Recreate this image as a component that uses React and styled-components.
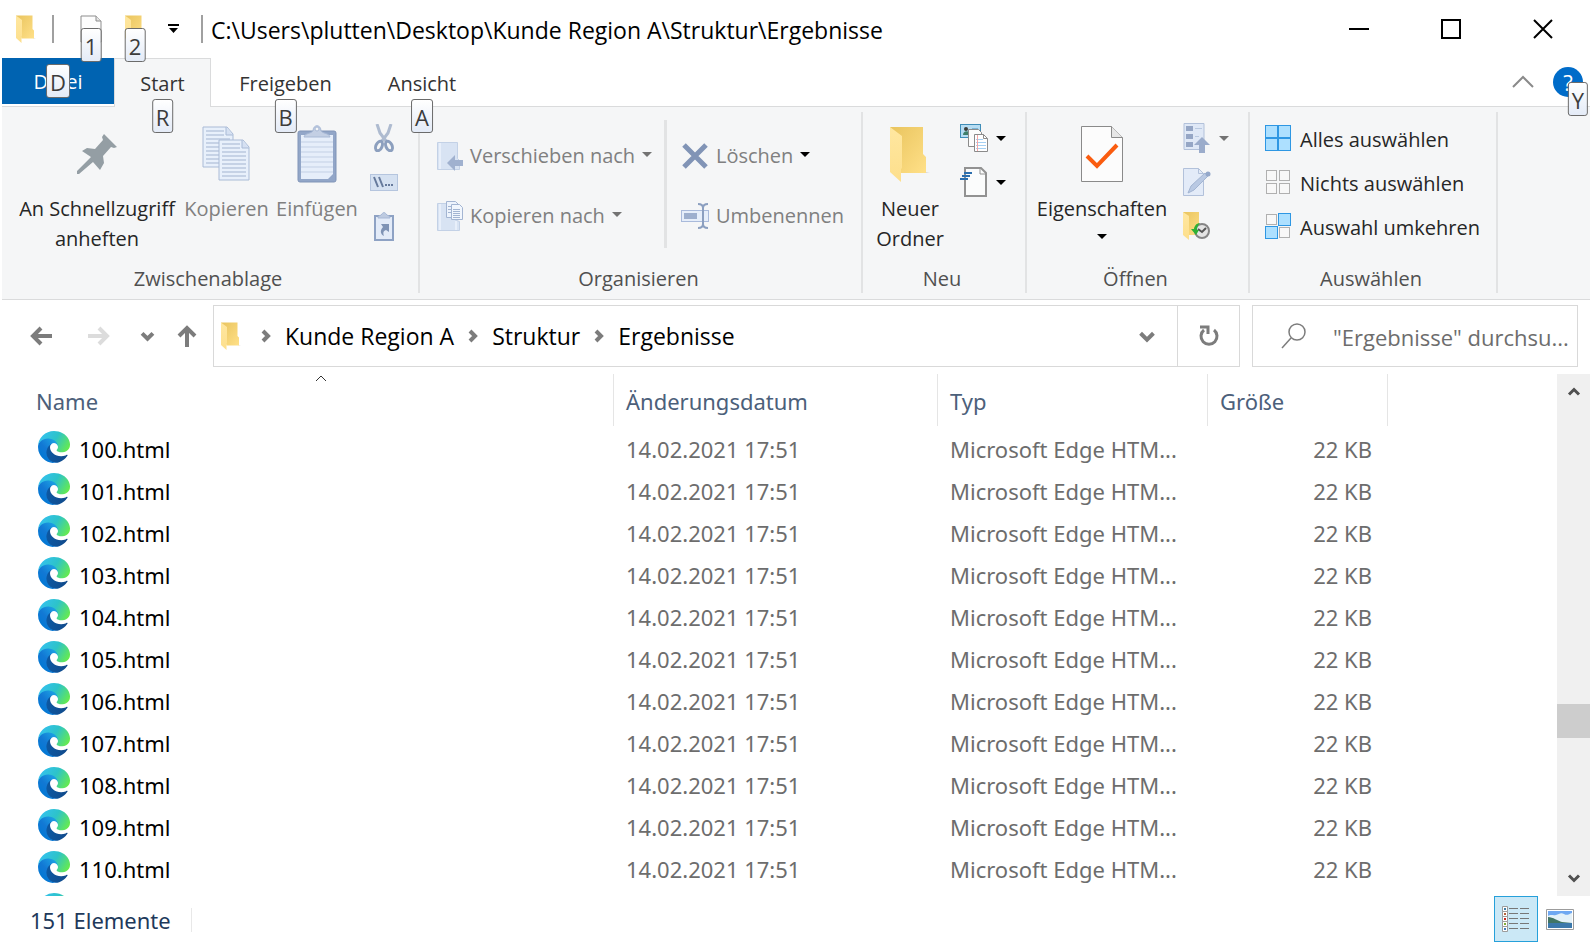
import React from "react";
import styled, { createGlobalStyle } from "styled-components";

const FILES = Array.from({ length: 12 }, (_, i) => ({
  name: `${100 + i}.html`,
  date: "14.02.2021 17:51",
  type: "Microsoft Edge HTM...",
  size: "22 KB",
}));

const CRUMBS = ["Kunde Region A", "Struktur", "Ergebnisse"];

/* ---------- icons ---------- */

const FolderIcon = ({ width, height }) => (
  <svg width={width} height={height} viewBox="0 0 40 56" preserveAspectRatio="none">
    <path d="M34 46h6l-4 1z" fill="#d8d8d8" />
    <path d="M0 1h33v27l3 3v16H11z" fill="url(#folderBack)" />
    <path d="M0 1l12 9v32l-1 1v13L0 46z" fill="url(#folderFront)" />
  </svg>
);

const PageIcon = () => (
  <svg width="22" height="28" viewBox="0 0 22 28">
    <path d="M1 1h15l5 5v21H1z" fill="#fdfdfd" stroke="#8d8d8d" />
    <path d="M16 1v5h5" fill="#e6e6e6" stroke="#8d8d8d" />
  </svg>
);

const CustomizeIcon = () => (
  <svg width="11" height="10" viewBox="0 0 11 10">
    <path d="M0 0h11v2H0zM1 4h9L5.5 9z" />
  </svg>
);

const Triangle = styled.span`
  width: 0;
  height: 0;
  border: 5px solid transparent;
  border-top-color: ${({ $muted }) => ($muted ? "#737373" : "#000")};
  border-bottom-width: 0;
`;

const PinIcon = () => (
  <svg width="42" height="42" viewBox="0 0 42 42">
    <path
      d="M28 1l13 13-3 1-3-1-8 9 1 7-4 7-7-8L3 41H1v-3l14-14-9-6 5-3 8 1 8-9-1-3z"
      fill="#949ea4"
    />
  </svg>
);

const Sheet = ({ x, y }) => (
  <g transform={`translate(${x} ${y})`}>
    <path d="M1 1h24l6 7v33H1z" fill="#e8f0fb" stroke="#aabbd6" />
    <path d="M24 1v8h7" fill="#d5e0f2" stroke="#aabbd6" />
    <path
      d="M4 5h18M4 9h18M4 13h24M4 17h24M4 21h24M4 25h24M4 29h24M4 33h24M4 37h24"
      stroke="#a3b4d0"
    />
  </g>
);

const CopyIcon = () => (
  <svg width="50" height="56" viewBox="0 0 50 56">
    <Sheet x={0} y={0} />
    <Sheet x={16} y={13} />
  </svg>
);

const PasteIcon = () => (
  <svg width="40" height="58" viewBox="0 0 40 58">
    <rect x="1" y="6" width="38" height="51" rx="2" fill="#92a6c8" stroke="#8195b8" />
    <path d="M4 10h32v39l-5 5H4z" fill="#e6eefa" />
    <path d="M4 17h32M4 22h32M4 27h32M4 32h32M4 37h32M4 42h32M4 47h32" stroke="#c3d0e5" />
    <path d="M7 12c1-4 6-3 9-6 0-7 8-7 8 0 3 3 8 2 9 6z" fill="#c3cfe4" stroke="#a7b8d5" />
    <circle cx="20" cy="4" r="2" fill="#f5f6f7" stroke="#a7b8d5" />
  </svg>
);

const ScissorsIcon = () => (
  <svg width="20" height="28" viewBox="0 0 20 28" fill="none">
    <path d="M3 0l3 9 6 8M17 0l-3 9-6 8" stroke="#aebbd0" strokeWidth="3" />
    <ellipse cx="5" cy="22" rx="3" ry="5" transform="rotate(25 5 22)" stroke="#8c9fbe" strokeWidth="3" />
    <ellipse cx="15" cy="22" rx="3" ry="5" transform="rotate(-25 15 22)" stroke="#8c9fbe" strokeWidth="3" />
  </svg>
);

const PathIcon = () => (
  <svg width="28" height="17" viewBox="0 0 28 17">
    <rect x="0.5" y="0.5" width="27" height="16" fill="#d5e1f1" stroke="#b5c5de" />
    <path d="M4 3l4 10M9 3l4 10" stroke="#667a9c" strokeWidth="2" />
    <path d="M15 10h2v2h-2zM18 10h2v2h-2zM21 10h2v2h-2z" fill="#667a9c" />
  </svg>
);

const ShortcutIcon = () => (
  <svg width="20" height="29" viewBox="0 0 20 29">
    <rect x="1" y="4" width="18" height="24" fill="#e3ebf8" stroke="#8ea2c4" strokeWidth="2" />
    <path d="M4 6c0-3 3-2 4-4 1-2 3-2 4 0 1 2 4 1 4 4z" fill="#bdcae0" stroke="#a7b8d5" />
    <path d="M7 12h8v8l-3-2c-3 1-3 3-2 6-4-2-4-6-1-9z" fill="#7f93b5" />
  </svg>
);

const MoveToIcon = () => (
  <svg width="26" height="29" viewBox="0 0 26 29">
    <path d="M.5.5h20v16l2 2v9H.5z" fill="#d8e3f3" stroke="#c3d1e6" />
    <path d="M3 1v26" stroke="#e8effa" strokeWidth="2" />
    <path d="M10 21l8-8v5h8v6h-8v5z" fill="#a0b1cf" />
  </svg>
);

const CopyToIcon = () => (
  <svg width="26" height="30" viewBox="0 0 26 30">
    <path d="M.5 2.500h17v16l5 2v9H.5z" fill="#d8e3f3" stroke="#c3d1e6" />
    <path d="M3 3v26M19 20v9" stroke="#e8effa" strokeWidth="2" />
    <path d="M9.500.5h9l3 3v13h-12z" fill="#edf3fc" stroke="#a3b5d2" />
    <path d="M14.500 3.500h8l3 3v12h-11z" fill="#f1f6fd" stroke="#a3b5d2" />
    <path d="M16 8.500h7M16 10.500h7M16 12.500h7M16 14.500h7M16 16.500h7M11 5.500h3M11 8.500h3M11 11.500h3" stroke="#a3b5d2" />
  </svg>
);

const DeleteIcon = () => (
  <svg width="28" height="26" viewBox="0 0 28 26">
    <path d="M3 2l22 22M25 2L3 24" stroke="#8194b6" strokeWidth="5" />
  </svg>
);

const RenameIcon = () => (
  <svg width="28" height="26" viewBox="0 0 28 26" fill="none">
    <rect x=".5" y="7.500" width="27" height="11" fill="#e6eefa" stroke="#a9badb" />
    <rect x="3" y="10" width="13" height="6" fill="#9dafce" />
    <path d="M17 1c3 0 5 1 5 4 0-3 2-4 5-4M17 25c3 0 5-1 5-4 0 3 2 4 5 4M22 4v18" stroke="#8b9fc0" strokeWidth="2" />
  </svg>
);

const NewItemIcon = () => (
  <svg width="28" height="28" viewBox="0 0 28 28">
    <rect x=".5" y=".5" width="20" height="13" fill="#b7ddf3" stroke="#3f8db8" />
    <circle cx="6" cy="5" r="2" fill="#3b3d3a" />
    <path d="M3 11c0-5 7-5 7 0z" fill="#3f7f6a" />
    <path d="M12 5h6" stroke="#3f8db8" />
    <path d="M8.500 5.500h10l3 3v14h-13z" fill="#fcfcfc" stroke="#8b8b8b" />
    <path d="M14.500 10.500h9l4 4v13h-13z" fill="#fff" stroke="#8b8b8b" />
    <path d="M23.500 10.500v4h4" fill="none" stroke="#8b8b8b" />
    <path d="M16 15.500h7M16 18.500h10M16 21.500h10M16 24.500h10" stroke="#a5d0f3" />
    <path d="M17.500 11v16" stroke="#f3a6a6" />
  </svg>
);

const EasyAccessIcon = () => (
  <svg width="28" height="30" viewBox="0 0 28 30">
    <path d="M5 1h16l5 5v23H5z" fill="#fbfcfc" stroke="#929292" strokeWidth="2" />
    <path d="M20 1v6h6" fill="none" stroke="#929292" />
    <path d="M4 6h8M2 9h8M0 12h8" stroke="#2c6fae" strokeWidth="2" />
  </svg>
);

const PropertiesIcon = () => (
  <svg width="42" height="56" viewBox="0 0 42 56">
    <path d="M.5.5h30l11 11v44H.5z" fill="#fcfcfc" stroke="#8a8a8a" />
    <path d="M30.500.5v11h11" fill="#e6e6e6" stroke="#8a8a8a" />
    <path d="M6 30l10 10 20-21" fill="none" stroke="#fa5c0f" strokeWidth="4" />
  </svg>
);

const OpenIcon = () => (
  <svg width="28" height="30" viewBox="0 0 28 30">
    <path d="M1 .5h20v26H1z" fill="#dfe8f6" stroke="#b2c1da" />
    <path d="M3 3h7v5H3zM3 11h7v5H3zM3 19h7v5H3z" fill="#95a6c5" />
    <path d="M12 5.500h7M12 13.500h4" stroke="#b9c9e0" />
    <path d="M19 14l8 8h-5v8h-6v-8h-5z" fill="#9baccb" />
  </svg>
);

const EditIcon = () => (
  <svg width="28" height="28" viewBox="0 0 28 28">
    <path d="M.5.5h15l5 5v22H.5z" fill="#e3ebf8" stroke="#b2c1da" />
    <path d="M15.500.5v5h5" fill="none" stroke="#b2c1da" />
    <path d="M5 25l3-7L22 5l3 3L11 22z" fill="#b9c9e3" stroke="#a3b5d2" />
    <circle cx="25" cy="6" r="2.500" fill="#94a8ca" />
  </svg>
);

const HistoryIcon = () => (
  <svg width="28" height="28" viewBox="0 0 28 28">
    <path d="M0 0h16v12l2 3v8H6z" fill="url(#folderBack)" />
    <path d="M0 0l6 4v24l-6-5z" fill="url(#folderFront)" />
    <circle cx="19" cy="19" r="7" fill="#e4e4e4" stroke="#858585" strokeWidth="2" />
    <path d="M15 17l4 3 4-4" fill="none" stroke="#555" strokeWidth="2" />
    <path d="M17 11c-4 0-6 4-6 6H8l5 6 3-5h-2c0-3 1-5 3-7z" fill="#2eb135" />
  </svg>
);

const SelectIcon = ({ cells }) => (
  <svg width="26" height="26" viewBox="0 0 26 26">
    {cells.map((on, i) => {
      const x = (i % 2) * 13;
      const y = Math.floor(i / 2) * 13;
      return on ? (
        <rect key={i} x={x + 0.5} y={y + 0.5} width="12" height="12" fill="#ade0ff" stroke="#2e97e3" />
      ) : (
        <rect key={i} x={x + 1.5} y={y + 1.5} width="10" height="10" fill="#f8f8f8" stroke="#b0b0b0" />
      );
    })}
  </svg>
);

const ArrowIcon = ({ color = "#7c7c7c", rotate = 0 }) => (
  <svg width="22" height="22" viewBox="0 0 22 22">
    <path
      d="M22 11H3M11 3l-8 8 8 8"
      transform={`rotate(${rotate} 11 11)`}
      fill="none"
      stroke={color}
      strokeWidth="4"
    />
  </svg>
);

const Chevron = ({ width, height, stroke, color, dir = "down" }) => (
  <svg width={width} height={height} viewBox="0 0 12 7" overflow="visible">
    <path
      d={dir === "up" ? "M1 6l5-5 5 5" : "M1 1l5 5 5-5"}
      fill="none"
      stroke={color}
      strokeWidth={stroke}
      vectorEffect="non-scaling-stroke"
    />
  </svg>
);

const CrumbIcon = () => (
  <svg width="10" height="14" viewBox="0 0 10 14">
    <path d="M2 2l5 5-5 5" fill="none" stroke="#7c7c7c" strokeWidth="4" />
  </svg>
);

const RefreshIcon = () => (
  <svg width="20" height="24" viewBox="0 0 20 24" fill="none" stroke="#7c7c7c">
    <path d="M15 6a8 8 0 1 1-10 0" strokeWidth="3" />
    <path d="M1 3h8v7" strokeWidth="3" />
  </svg>
);

const SearchIcon = () => (
  <svg width="26" height="26" viewBox="0 0 26 26" fill="none" stroke="#7c7c7c">
    <circle cx="16" cy="9" r="8" strokeWidth="1.500" />
    <path d="M10 15L1 25" strokeWidth="1.500" />
  </svg>
);

const EdgeIcon = () => (
  <svg width="32" height="32" viewBox="0 0 256 256">
    <path
      fill="url(#edgeDark)"
      d="M231 190.500a94 94 0 0 1-10.500 4.700 102 102 0 0 1-36 6.500c-47.300 0-88.500-32.600-88.500-74.300a31.500 31.500 0 0 1 16.400-27.300c-42.800 1.800-53.800 46.400-53.800 72.500 0 73.900 68.100 81.400 82.800 81.400 7.900 0 19.800-2.300 27-4.600l1.300-.4a128 128 0 0 0 66.600-52.800 4 4 0 0 0-5.300-5.700z"
    />
    <path
      fill="url(#edgeBlue)"
      d="M105.700 241.400a79 79 0 0 1-22.700-21.300 80.700 80.700 0 0 1 29.500-120c3.100-1.500 8.500-4.100 15.600-4a32.400 32.400 0 0 1 25.700 13 31.900 31.900 0 0 1 6.300 18.700c0-.2 24.500-79.600-80-79.600-43.900 0-80 41.700-80 78.200a130 130 0 0 0 12.100 56 128 128 0 0 0 156.400 67.100 75.500 75.500 0 0 1-62.800-8z"
    />
    <path
      fill="url(#edgeGreen)"
      d="M152.300 148.900c-.8 1-3.300 2.500-3.300 5.600 0 2.600 1.700 5.100 4.700 7.200 14.400 10 41.500 8.700 41.600 8.700a59.600 59.600 0 0 0 30.300-8.300 61.400 61.400 0 0 0 30.400-52.900c.3-22.400-8-37.300-11.300-43.900C223.500 23.800 177.700 0 128 0A128 128 0 0 0 0 126.200c.5-36.500 36.800-66 80-66 3.500 0 23.500.3 42 10 16.300 8.600 24.900 19 30.900 29.200 6.100 10.700 7.200 24.200 7.200 29.500 0 5.400-2.700 13.300-7.800 20z"
    />
  </svg>
);

const DetailsIcon = () => (
  <svg width="28" height="26" viewBox="0 0 28 26">
    {["#3f7fa8", "#b5633c", "#c8281e", "#7fae3a", "#3f7fc0"].map((c, i) => (
      <g key={c} transform={`translate(0 ${i * 5})`}>
        <path d="M.5.5h5v5h-5z" fill="#fff" stroke="#9c9c9c" />
        <path d="M2 2h2v2H2z" fill={c} />
        <path d="M7 2.500h9M18 2.500h9" stroke="#777" />
      </g>
    ))}
  </svg>
);

const ThumbnailIcon = () => (
  <svg width="28" height="21" viewBox="0 0 28 21">
    <path d="M.5.5h27v20H.5z" fill="#fff" stroke="#9c9c9c" />
    <path d="M2 2h24v12H2z" fill="#6fa8f2" />
    <path d="M2 7c3-2 5 0 8-1s5-3 8-1 5 0 8-1v10H2z" fill="#e4f1f8" />
    <path d="M2 8c5 0 10 4 14 5l10 1H2z" fill="#417565" />
    <path d="M2 14h24v5H2z" fill="#3b78ab" />
  </svg>
);

// gradients shared by the folder and Edge icons
const IconDefs = () => (
  <DefsSvg aria-hidden="true">
    <defs>
      <linearGradient id="folderBack" x1="0" x2="1" y1="0" y2="1">
        <stop offset="0" stopColor="#e9c45e" />
        <stop offset="1" stopColor="#ffe088" />
      </linearGradient>
      <linearGradient id="folderFront" x1="0" x2="0" y1="0" y2="1">
        <stop offset="0" stopColor="#ffe7a0" />
        <stop offset="1" stopColor="#fddf8c" />
      </linearGradient>
      <linearGradient id="edgeDark" x1="0" x2="1" y1="0.5" y2="0.6">
        <stop offset="0" stopColor="#0c59a4" />
        <stop offset="1" stopColor="#114a8b" />
      </linearGradient>
      <linearGradient id="edgeBlue" x1="0.8" x2="0.2" y1="0.2" y2="0.9">
        <stop offset="0" stopColor="#1b9de2" />
        <stop offset="0.5" stopColor="#1278d4" />
        <stop offset="1" stopColor="#0078d4" />
      </linearGradient>
      <linearGradient id="edgeGreen" x1="0" x2="1" y1="0.3" y2="0.7">
        <stop offset="0" stopColor="#35c1f1" />
        <stop offset="0.5" stopColor="#2dc3c9" />
        <stop offset="1" stopColor="#66eb4e" />
      </linearGradient>
    </defs>
  </DefsSvg>
);

/* ---------- page ---------- */

const App = () => (
  <>
    <GlobalStyle />
    <IconDefs />
    <Window>
      <TitleBar />
      <Tabs />
      <Ribbon />
      <AddressBar />
      <FileList />
      <StatusBar />
    </Window>
  </>
);

const TitleBar = () => (
  <TitleRow>
    <QuickAccess>
      <FolderIcon width={20} height={28} />
      <Separator />
      <QuickButton aria-label="Eigenschaften">
        <PageIcon />
        <KeyTip $top={13}>1</KeyTip>
      </QuickButton>
      <QuickButton aria-label="Neuer Ordner">
        <FolderIcon width={20} height={28} />
        <KeyTip $top={13}>2</KeyTip>
      </QuickButton>
      <CustomizeButton aria-label="Schnellzugriff anpassen">
        <CustomizeIcon />
      </CustomizeButton>
      <Separator />
    </QuickAccess>
    <Title>{"C:\\Users\\plutten\\Desktop\\Kunde Region A\\Struktur\\Ergebnisse"}</Title>
    <WindowButton aria-label="Minimieren">
      <svg width="20" height="20" viewBox="0 0 20 20">
        <path d="M0 10h20" stroke="#000" strokeWidth="2" />
      </svg>
    </WindowButton>
    <WindowButton aria-label="Maximieren">
      <svg width="20" height="20" viewBox="0 0 20 20">
        <path d="M1 1h18v18H1z" fill="none" stroke="#000" strokeWidth="2" />
      </svg>
    </WindowButton>
    <WindowButton aria-label="Schließen">
      <svg width="20" height="20" viewBox="0 0 20 20">
        <path d="M1 1l18 18M19 1L1 19" stroke="#000" strokeWidth="2" />
      </svg>
    </WindowButton>
  </TitleRow>
);

const Tabs = () => (
  <TabRow>
    <FileTab>
      Datei
      <KeyTip $top={6}>D</KeyTip>
    </FileTab>
    <Tab $width={97} $active>
      Start
      <KeyTip $top={40}>R</KeyTip>
    </Tab>
    <Tab $width={149}>
      Freigeben
      <KeyTip $top={41}>B</KeyTip>
    </Tab>
    <Tab $width={124}>
      Ansicht
      <KeyTip $top={41}>A</KeyTip>
    </Tab>
    <TabTools>
      <PlainButton aria-label="Menüband minimieren">
        <Chevron width={24} height={14} stroke={2} color="#8a8a8a" dir="up" />
      </PlainButton>
      <HelpButton>
        ?
        <KeyTip $top={15} $left={25}>Y</KeyTip>
      </HelpButton>
    </TabTools>
  </TabRow>
);

const Ribbon = () => (
  <RibbonBar>
    <Group $width={418}>
      <GroupBody $pad={9}>
        <LargeButton $width={172}>
          <LargeIcon><PinIcon /></LargeIcon>
          <LargeText>An Schnellzugriff<br />anheften</LargeText>
        </LargeButton>
        <LargeButton $width={87} disabled>
          <LargeIcon><CopyIcon /></LargeIcon>
          <LargeText>Kopieren</LargeText>
        </LargeButton>
        <LargeButton $width={94} disabled>
          <LargeIcon><PasteIcon /></LargeIcon>
          <LargeText>Einfügen</LargeText>
        </LargeButton>
        <SmallColumn $gap={6}>
          <IconButton aria-label="Ausschneiden" disabled><ScissorsIcon /></IconButton>
          <IconButton aria-label="Pfad kopieren" disabled><PathIcon /></IconButton>
          <IconButton aria-label="Verknüpfung einfügen" disabled><ShortcutIcon /></IconButton>
        </SmallColumn>
      </GroupBody>
      <GroupLabel>Zwischenablage</GroupLabel>
    </Group>

    <Group $width={443}>
      <GroupBody $pad={17}>
        <ActionColumn $width={227}>
          <ActionButton disabled>
            <MoveToIcon />
            Verschieben nach
            <Triangle $muted />
          </ActionButton>
          <ActionButton disabled>
            <CopyToIcon />
            Kopieren nach
            <Triangle $muted />
          </ActionButton>
        </ActionColumn>
        <InnerDivider />
        <ActionColumn $width={176}>
          <ActionButton disabled>
            <DeleteIcon />
            Löschen
            <Triangle />
          </ActionButton>
          <ActionButton disabled>
            <RenameIcon />
            Umbenennen
          </ActionButton>
        </ActionColumn>
      </GroupBody>
      <GroupLabel>Organisieren</GroupLabel>
    </Group>

    <Group $width={164}>
      <GroupBody $pad={8}>
        <LargeButton $width={78}>
          <LargeIcon><FolderIcon width={40} height={56} /></LargeIcon>
          <LargeText>Neuer<br />Ordner</LargeText>
        </LargeButton>
        <SmallColumn $gap={11}>
          <IconButton aria-label="Neues Element"><NewItemIcon /><Triangle /></IconButton>
          <IconButton aria-label="Einfacher Zugriff"><EasyAccessIcon /><Triangle /></IconButton>
        </SmallColumn>
      </GroupBody>
      <GroupLabel>Neu</GroupLabel>
    </Group>

    <Group $width={223}>
      <GroupBody $pad={4}>
        <LargeButton $width={142}>
          <LargeIcon><PropertiesIcon /></LargeIcon>
          <LargeText>Eigenschaften</LargeText>
          <LargeArrow><Triangle /></LargeArrow>
        </LargeButton>
        <SmallColumn $gap={10}>
          <IconButton aria-label="Öffnen" disabled><OpenIcon /><Triangle $muted /></IconButton>
          <IconButton aria-label="Bearbeiten" disabled $start><EditIcon /></IconButton>
          <IconButton aria-label="Verlauf" $start><HistoryIcon /></IconButton>
        </SmallColumn>
      </GroupBody>
      <GroupLabel>Öffnen</GroupLabel>
    </Group>

    <Group $width={248}>
      <GroupBody $pad={15}>
        <SelectColumn>
          <SelectButton><SelectIcon cells={[1, 1, 1, 1]} /><span>Alles auswählen</span></SelectButton>
          <SelectButton><SelectIcon cells={[0, 0, 0, 0]} /><span>Nichts auswählen</span></SelectButton>
          <SelectButton><SelectIcon cells={[0, 1, 1, 0]} /><span>Auswahl umkehren</span></SelectButton>
        </SelectColumn>
      </GroupBody>
      <GroupLabel>Auswählen</GroupLabel>
    </Group>
  </RibbonBar>
);

const AddressBar = () => (
  <AddressRow>
    <NavButtons>
      <NavButton $width={58} aria-label="Zurück"><ArrowIcon /></NavButton>
      <NavButton $width={58} aria-label="Vorwärts" disabled><ArrowIcon color="#dcdcdc" rotate={180} /></NavButton>
      <NavButton $width={38} aria-label="Zuletzt besucht">
        <Chevron width={13} height={8} stroke={4} color="#7c7c7c" />
      </NavButton>
      <NavButton $width={42} aria-label="Nach oben"><ArrowIcon rotate={90} /></NavButton>
    </NavButtons>
    <PathBox>
      <FolderIcon width={20} height={28} />
      {CRUMBS.map((crumb) => (
        <React.Fragment key={crumb}>
          <CrumbArrow><CrumbIcon /></CrumbArrow>
          <Crumb href="#">{crumb}</Crumb>
        </React.Fragment>
      ))}
      <PathDrop aria-label="Vorherige Orte">
        <Chevron width={16} height={9} stroke={4} color="#7c7c7c" />
      </PathDrop>
      <RefreshButton aria-label="Aktualisieren"><RefreshIcon /></RefreshButton>
    </PathBox>
    <SearchBox>
      <SearchIcon />
      <SearchInput aria-label="Suchen" placeholder={'"Ergebnisse" durchsu...'} />
    </SearchBox>
  </AddressRow>
);

const FileList = () => (
  <ListArea>
    <ListScroll>
      <Table>
        <colgroup>
          <NameCol />
          <DateCol />
          <TypeCol />
          <SizeCol />
          <col />
        </colgroup>
        <thead>
          <tr>
            <HeadCell $first>
              Name
              <SortMark>
                <Chevron width={14} height={7} stroke={1} color="#333" dir="up" />
              </SortMark>
            </HeadCell>
            <HeadCell>Änderungsdatum</HeadCell>
            <HeadCell>Typ</HeadCell>
            <HeadCell>Größe</HeadCell>
            <td />
          </tr>
        </thead>
        <tbody>
          {FILES.map((file) => (
            <tr key={file.name}>
              <NameCell>
                <FileName><EdgeIcon />{file.name}</FileName>
              </NameCell>
              <Cell>{file.date}</Cell>
              <Cell>{file.type}</Cell>
              <Cell $right>{file.size}</Cell>
              <td />
            </tr>
          ))}
        </tbody>
      </Table>
    </ListScroll>
    <Scrollbar>
      <ScrollButton aria-label="Nach oben scrollen">
        <Chevron width={12} height={8} stroke={3} color="#505050" dir="up" />
      </ScrollButton>
      <Track $grow={12} />
      <Thumb />
      <Track $grow={5} />
      <ScrollButton aria-label="Nach unten scrollen">
        <Chevron width={12} height={8} stroke={3} color="#505050" />
      </ScrollButton>
    </Scrollbar>
  </ListArea>
);

const StatusBar = () => (
  <StatusRow>
    <StatusText>151 Elemente</StatusText>
    <ViewButton aria-label="Details" $active><DetailsIcon /></ViewButton>
    <ViewButton aria-label="Große Symbole"><ThumbnailIcon /></ViewButton>
  </StatusRow>
);

/* ---------- styles ---------- */

const GlobalStyle = createGlobalStyle`
  * {
    box-sizing: border-box;
  }
  body {
    margin: 0;
    background: #fff;
    font-family: "Open Sans", "Noto Sans", sans-serif;
    font-size: 22px;
    color: #000;
  }
  button {
    border: 0;
    padding: 0;
    background: none;
    font: inherit;
    color: inherit;
  }
  svg {
    display: block;
    flex-shrink: 0;
  }
`;

const DefsSvg = styled.svg`
  position: absolute;
  width: 0;
  height: 0;
`;

const Window = styled.div`
  display: flex;
  flex-direction: column;
  height: 100vh;
  padding: 0 2px;
  overflow: hidden;
`;

const KeyTip = styled.span`
  position: absolute;
  top: ${({ $top }) => $top}px;
  left: ${({ $left }) => ($left ? `${$left}px` : "50%")};
  transform: translateX(-50%);
  z-index: 1;
  min-width: 20px;
  height: 34px;
  padding: 0 3px;
  border: 1px solid #6b6b6b;
  border-radius: 3px;
  background: linear-gradient(#fff, #e4ebf7);
  color: #3c3c3c;
  font-size: 22px;
  line-height: 34px;
  text-align: center;
`;

const PlainButton = styled.button`
  display: flex;
  align-items: center;
  justify-content: center;
`;

const TitleRow = styled.header`
  display: flex;
  align-items: center;
  height: 58px;
  padding-right: 1px;
`;

const QuickAccess = styled.div`
  display: flex;
  align-items: center;
  padding-left: 14px;
`;

const Separator = styled.span`
  width: 2px;
  height: 28px;
  margin-left: 16px;
  background: #a0a0a0;
`;

const QuickButton = styled(PlainButton)`
  position: relative;
  width: 44px;
  height: 28px;
  &:first-of-type {
    margin-left: 15px;
  }
`;

const CustomizeButton = styled(PlainButton)`
  width: 24px;
  margin-left: 4px;
`;

const Title = styled.h1`
  flex: 1;
  margin: 0 0 0 8px;
  overflow: hidden;
  font-size: 23px;
  font-weight: 400;
  line-height: 32px;
  padding-top: 2px;
  white-space: nowrap;
`;

const WindowButton = styled(PlainButton)`
  width: 92px;
  height: 58px;
`;

const TabRow = styled.nav`
  display: flex;
  height: 48px;
  font-size: 20px;
`;

const FileTab = styled.button`
  position: relative;
  width: 112px;
  height: 46px;
  background: #0063b1;
  color: #fff;
`;

const Tab = styled.button`
  position: relative;
  width: ${({ $width }) => $width}px;
  height: 49px;
  padding-top: ${({ $active }) => ($active ? 0 : 2)}px;
  color: #333;
  ${({ $active }) =>
    $active &&
    `
    border: 1px solid #dadbdc;
    border-bottom: 0;
    background: #f5f6f7;
  `}
`;

const TabTools = styled.div`
  display: flex;
  align-items: center;
  gap: 18px;
  margin-left: auto;
  padding-right: 7px;
`;

const HelpButton = styled.button`
  position: relative;
  width: 30px;
  height: 30px;
  border-radius: 50%;
  background: #006cc9;
  color: #fff;
  font-size: 22px;
  line-height: 30px;
`;

const RibbonBar = styled.section`
  display: flex;
  height: 194px;
  padding: 5px 0 6px;
  border-top: 1px solid #dadbdc;
  border-bottom: 1px solid #dadbdc;
  background: #f5f6f7;
  color: #262626;
  font-size: 20px;
  line-height: 30px;
`;

const Group = styled.div`
  display: flex;
  flex-direction: column;
  flex: none;
  width: ${({ $width }) => $width}px;
  border-right: 2px solid #e2e3e4;
`;

const GroupBody = styled.div`
  display: flex;
  flex: 1;
  padding-left: ${({ $pad }) => $pad}px;
`;

const GroupLabel = styled.div`
  height: 29px;
  padding-right: 4px;
  color: #505050;
  text-align: center;
`;

const LargeButton = styled.button`
  display: flex;
  flex-direction: column;
  align-items: center;
  width: ${({ $width }) => $width}px;
  color: ${({ disabled }) => (disabled ? "#808080" : "#262626")};
  white-space: nowrap;
`;

const LargeIcon = styled.span`
  display: flex;
  align-items: center;
  justify-content: center;
  height: 60px;
  margin: 12px 0 10px;
`;

const LargeText = styled.span`
  line-height: 30px;
  text-align: center;
`;

const LargeArrow = styled.span`
  display: flex;
  align-items: center;
  height: 24px;
`;

const SmallColumn = styled.div`
  display: flex;
  flex-direction: column;
  padding: 4px 0 0 ${({ $gap }) => $gap}px;
`;

const IconButton = styled(PlainButton)`
  gap: 8px;
  justify-content: ${({ $start }) => ($start ? "flex-start" : "center")};
  min-width: 28px;
  height: 44px;
`;

const ActionColumn = styled.div`
  display: flex;
  flex-direction: column;
  width: ${({ $width }) => $width}px;
  padding-top: 14px;
`;

const ActionButton = styled.button`
  display: flex;
  align-items: center;
  gap: 7px;
  height: 60px;
  color: #808080;
  white-space: nowrap;
  ${Triangle} {
    margin-bottom: 4px;
  }
`;

const InnerDivider = styled.span`
  width: 3px;
  height: 128px;
  margin: 8px 14px 0 0;
  background: #e2e3e4;
`;

const SelectColumn = styled.div`
  display: flex;
  flex-direction: column;
  padding-top: 4px;
`;

const SelectButton = styled.button`
  display: flex;
  align-items: center;
  gap: 9px;
  height: 44px;
  white-space: nowrap;
  span {
    padding-top: 3px;
  }
`;

const AddressRow = styled.div`
  display: flex;
  gap: 12px;
  padding: 5px 12px 7px 0;
  height: 74px;
`;

const NavButtons = styled.div`
  display: flex;
  align-items: center;
  width: 199px;
  padding-left: 10px;
`;

const NavButton = styled(PlainButton)`
  flex: none;
  width: ${({ $width }) => $width}px;
  height: 60px;
`;

const PathBox = styled.div`
  display: flex;
  flex: 1;
  align-items: center;
  height: 62px;
  padding-left: 7px;
  border: 1px solid #d9d9d9;
`;

const CrumbArrow = styled.span`
  display: flex;
  justify-content: center;
  width: 38px;
  &:first-of-type {
    width: 44px;
    padding-left: 6px;
  }
`;

const Crumb = styled.a`
  color: #000;
  font-size: 23px;
  text-decoration: none;
  white-space: nowrap;
`;

const PathDrop = styled(PlainButton)`
  width: 60px;
  height: 60px;
  margin-left: auto;
`;

const RefreshButton = styled(PlainButton)`
  width: 62px;
  height: 60px;
  border-left: 1px solid #d9d9d9;
`;

const SearchBox = styled.div`
  display: flex;
  align-items: center;
  gap: 26px;
  width: 326px;
  height: 62px;
  padding-left: 28px;
  border: 1px solid #d9d9d9;
`;

const SearchInput = styled.input`
  flex: 1;
  min-width: 0;
  padding: 2px 0 0;
  border: 0;
  outline: 0;
  background: none;
  font: inherit;
  &::placeholder {
    color: #6d6d6d;
    opacity: 1;
  }
`;

const ListArea = styled.main`
  display: flex;
  flex: 1;
  min-height: 0;
  font-family: "Noto Sans", "Open Sans", sans-serif;
`;

const ListScroll = styled.div`
  flex: 1;
  overflow: hidden;
`;

const Table = styled.table`
  width: 100%;
  border-collapse: separate;
  border-spacing: 0;
  table-layout: fixed;
`;

const NameCol = styled.col`
  width: 612px;
`;

const DateCol = styled.col`
  width: 324px;
`;

const TypeCol = styled.col`
  width: 270px;
`;

const SizeCol = styled.col`
  width: 180px;
`;

const HeadCell = styled.th`
  position: relative;
  height: 54px;
  padding: 0 0 0 ${({ $first }) => ($first ? 34 : 12)}px;
  background: linear-gradient(#e5e5e5, #e5e5e5) right top / 1px 52px no-repeat;
  color: #4c607a;
  font-weight: 400;
  text-align: left;
`;

const SortMark = styled.span`
  position: absolute;
  top: 1px;
  left: 51%;
`;

const Cell = styled.td`
  height: 42px;
  padding: 0 ${({ $right }) => ($right ? 16 : 0)}px 0 12px;
  color: #6d6d6d;
  line-height: 30px;
  text-align: ${({ $right }) => ($right ? "right" : "left")};
  white-space: nowrap;
`;

const NameCell = styled(Cell)`
  padding: 0 0 0 36px;
  color: #000;
`;

const FileName = styled.div`
  display: flex;
  align-items: center;
  gap: 9px;
  height: 36px;
  svg {
    margin-bottom: 4px;
  }
`;

const Scrollbar = styled.div`
  display: flex;
  flex-direction: column;
  width: 33px;
  background: #f0f0f0;
`;

const ScrollButton = styled(PlainButton)`
  height: 36px;
`;

const Track = styled.div`
  flex: ${({ $grow }) => $grow};
`;

const Thumb = styled.div`
  height: 34px;
  background: #cdcdcd;
`;

const StatusRow = styled.footer`
  display: flex;
  height: 48px;
  padding-right: 8px;
  font-family: "Noto Sans", "Open Sans", sans-serif;
`;

const StatusText = styled.div`
  height: 24px;
  margin: 12px auto 0 0;
  padding: 0 20px 0 28px;
  border-right: 1px solid #e8e8e8;
  color: #1e395b;
  line-height: 24px;
`;

const ViewButton = styled(PlainButton)`
  width: 44px;
  height: 46px;
  border: ${({ $active }) => ($active ? "1px solid #26a0da" : "0")};
  background: ${({ $active }) => ($active ? "#cbe8f6" : "none")};
`;

export default App;
